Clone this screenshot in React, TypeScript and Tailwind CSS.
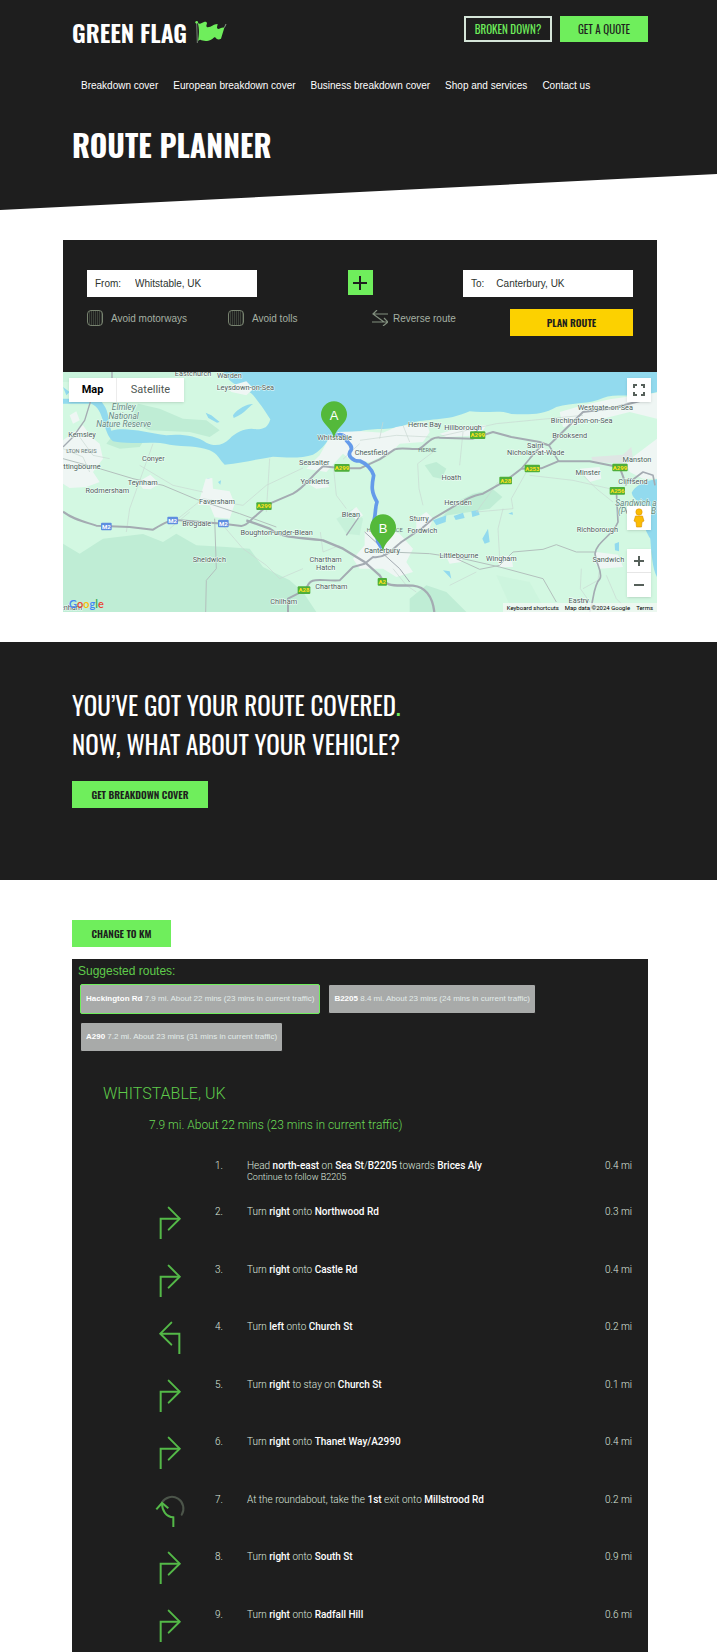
import React from "react";

const display = "font-['Oswald',sans-serif]";
const body = "font-['Liberation_Sans',Arial,sans-serif]";
const roboto = "font-['Roboto',sans-serif]";

const navLinks = ["Breakdown cover", "European breakdown cover", "Business breakdown cover", "Shop and services", "Contact us"];

const routes = [
  { name: "Hackington Rd", info: "7.9 mi. About 22 mins (23 mins in current traffic)", selected: true },
  { name: "B2205", info: "8.4 mi. About 23 mins (24 mins in current traffic)", selected: false },
  { name: "A290", info: "7.2 mi. About 23 mins (31 mins in current traffic)", selected: false },
];

type Turn = "none" | "right" | "left" | "roundabout";
const steps: { turn: Turn; text: React.ReactNode; note?: string; distance: string }[] = [
  { turn: "none", text: <>Head <b>north-east</b> on <b>Sea St</b>/<b>B2205</b> towards <b>Brices Aly</b></>, note: "Continue to follow B2205", distance: "0.4 mi" },
  { turn: "right", text: <>Turn <b>right</b> onto <b>Northwood Rd</b></>, distance: "0.3 mi" },
  { turn: "right", text: <>Turn <b>right</b> onto <b>Castle Rd</b></>, distance: "0.4 mi" },
  { turn: "left", text: <>Turn <b>left</b> onto <b>Church St</b></>, distance: "0.2 mi" },
  { turn: "right", text: <>Turn <b>right</b> to stay on <b>Church St</b></>, distance: "0.1 mi" },
  { turn: "right", text: <>Turn <b>right</b> onto <b>Thanet Way/A2990</b></>, distance: "0.4 mi" },
  { turn: "roundabout", text: <>At the roundabout, take the <b>1st</b> exit onto <b>Millstrood Rd</b></>, distance: "0.2 mi" },
  { turn: "right", text: <>Turn <b>right</b> onto <b>South St</b></>, distance: "0.9 mi" },
  { turn: "right", text: <>Turn <b>right</b> onto <b>Radfall Hill</b></>, distance: "0.6 mi" },
];

function rowHeight(index: number) {
  if (index === 0) return "h-[46px]";
  if (index === steps.length - 1) return "h-10";
  return index % 2 === 0 ? "h-[57px]" : "h-[58px]";
}

function FlagIcon() {
  return (
    <svg viewBox="0 0 96 69" className="h-[23px] w-8" aria-hidden="true">
      <path d="M5 4 L7 66" stroke="#8a9a8a" strokeWidth="2.5" fill="none" />
      <circle cx="5" cy="4" r="4" fill="#6fee5c" />
      <path d="M8 5 C14 12 20 6 27 3 C32 1 36 3 36 7 L34 14 C35 20 39 19 46 17 C54 13 60 9 68 9 L66 19 C66 24 70 25 76 22 C80 20 84 19 88 20 L78 53 C70 58 64 54 60 48 C55 50 50 58 40 59 C28 61 22 58 16 56 C12 56 10 59 9 61 C12 42 14 26 8 5 Z" fill="#6fee5c" />
      <path d="M88 20 L93 9" stroke="#8a9a8a" strokeWidth="3" />
    </svg>
  );
}

function TurnIcon({ turn }: { turn: Turn }) {
  if (turn === "none") return null;
  if (turn === "roundabout") {
    return (
      <svg viewBox="0 0 96 102" className="h-[34px] w-8" fill="none" strokeWidth="6" aria-hidden="true">
        <path d="M24 25 A34 34 0 1 1 83 62" stroke="#4c554a" strokeLinecap="round" />
        <path d="M58 99 V70 C36 68 24 50 24 28" stroke="#54b948" />
        <path d="M7 46 L24 27 L43 43" stroke="#54b948" />
      </svg>
    );
  }
  return (
    <svg viewBox="0 0 96 102" className={turn === "left" ? "h-[34px] w-8 -scale-x-100" : "h-[34px] w-8"} fill="none" stroke="#54b948" strokeWidth="6" aria-hidden="true">
      <path d="M20 99 V38 H76" />
      <path d="M44 5 L77 38 L44 71" strokeLinecap="round" />
    </svg>
  );
}

const places: [string, number, number][] = [
  ["Eastchurch", 390, 9], ["Warden", 499, 15], ["Leysdown-on-Sea", 547, 51], ["Kemsley", 57, 192],
  ["Conyer", 271, 264], ["ttingbourne", 57, 289], ["Teynham", 239, 336], ["Rodmersham", 133, 361],
  ["Faversham", 462, 392], ["Brogdale", 401, 458], ["Boughton-under-Blean", 641, 485], ["Sheldwich", 439, 568],
  ["Chartham", 788, 568], ["Hatch", 788, 590], ["Chartham", 805, 647], ["Chilham", 662, 694],
  ["Seasalter", 754, 276], ["Yorkletts", 756, 332], ["Whitstable", 815, 202], ["Blean", 864, 431],
  ["Chestfield", 924, 247], ["Herne Bay", 1085, 161], ["Hillborough", 1200, 170], ["Westgate-on-Sea", 1627, 110],
  ["Birchington-on-Sea", 1556, 150], ["Brooksend", 1520, 195], ["Saint", 1417, 224], ["Nicholas-at-Wade", 1418, 246],
  ["Manston", 1722, 267], ["Minster", 1575, 305], ["Cliffsend", 1710, 332], ["Hoath", 1165, 320],
  ["Hersden", 1185, 397], ["Sturry", 1068, 443], ["Fordwich", 1078, 480], ["Richborough", 1603, 476],
  ["Canterbury", 957, 541], ["Littlebourne", 1188, 554], ["Wingham", 1315, 563], ["Sandwich", 1636, 568],
  ["Eastry", 1547, 689], ["enham", 24, 712],
];

const shields: [string, number, number, "a" | "m"][] = [
  ["A299", 837, 287, "a"], ["A299", 603, 402, "a"], ["A28", 723, 654, "a"], ["A299", 1244, 189, "a"],
  ["A253", 1408, 289, "a"], ["A28", 1328, 325, "a"], ["A299", 1671, 286, "a"], ["A256", 1663, 356, "a"],
  ["A2", 958, 629, "a"], ["M2", 130, 463, "m"], ["M2", 329, 445, "m"], ["M2", 481, 454, "m"],
];

function Pin({ x, y, label }: { x: number; y: number; label: string }) {
  return (
    <g>
      <path d={`M${x} ${y} C${x - 8} ${y - 34} ${x - 39} ${y - 42} ${x - 39} ${y - 71} A39 39 0 0 1 ${x + 39} ${y - 71} C${x + 39} ${y - 42} ${x + 8} ${y - 34} ${x} ${y} Z`} fill="#54b93a" />
      <text x={x} y={y - 54} textAnchor="middle" fontSize="39" fill="#fff" className={body}>{label}</text>
    </g>
  );
}

function MapDrawing() {
  return (
    <svg viewBox="0 0 1782 720" preserveAspectRatio="xMidYMid slice" className={`block h-full w-full ${roboto}`} role="img" aria-label="Map of the route from Whitstable to Canterbury">
      <rect width="1782" height="720" fill="#d3f8e2" />
      <g fill="#bfedd5">
        <path d="M0 515 L50 545 L120 500 L240 486 L300 510 L340 485 L400 520 L490 525 L560 530 L600 585 L680 625 L720 660 L760 720 L0 720 Z" />
        <path d="M225 95 L290 110 L360 140 L430 145 L470 175 L440 195 L380 180 L260 175 L200 150 Z" />
        <path d="M150 190 L250 195 L230 225 L170 230 L130 215 Z" />
        <path d="M1180 390 L1230 365 L1290 352 L1318 375 L1280 410 L1220 420 L1140 432 Z" />
        <path d="M1085 280 L1120 270 L1150 290 L1135 320 L1110 315 Z" />
        <path d="M1040 680 L1090 640 L1150 660 L1210 720 L1040 720 Z" />
        <path d="M820 440 L870 410 L900 440 L890 490 L850 485 Z" opacity=".6" />
        <path d="M0 0 L420 0 L400 12 L200 20 L0 30 Z" opacity=".5" />
        <path d="M1300 610 L1400 630 L1450 720 L1350 720 Z" opacity=".3" />
      </g>
      <g fill="#92daee">
        <path d="M480 0 C510 50 555 45 575 75 C598 105 605 115 622 142 C615 165 605 172 580 172 C555 165 520 178 500 200 C480 220 455 225 430 212 C400 190 350 185 310 190 C250 182 190 164 145 176 C135 150 140 120 120 95 L110 80 L0 80 L0 95 L85 95 C125 110 118 180 150 208 C200 220 270 205 320 218 C370 225 400 220 440 235 C465 245 470 265 485 278 C540 272 580 262 630 254 C680 258 720 258 750 248 C785 228 790 205 815 185 L891 178 C940 165 980 180 1040 154 C1090 138 1150 150 1220 118 C1270 125 1310 112 1345 126 C1390 128 1440 130 1480 105 C1530 90 1580 98 1620 78 C1660 62 1720 80 1782 60 L1782 0 Z" />
        <path d="M1782 322 C1740 325 1715 345 1706 362 C1710 385 1740 395 1748 410 C1735 440 1745 475 1762 500 C1765 540 1768 590 1782 615 Z" />
        <path d="M510 130 C525 108 555 95 570 96 C555 105 550 122 512 138 Z M428 122 L445 130 L470 150 L462 152 L436 138 Z" />
        <path d="M1110 445 L1150 430 L1148 450 L1120 460 Z M1172 432 L1200 422 L1205 438 L1178 444 Z M1225 418 L1245 414 L1250 428 L1228 435 Z M1258 500 L1275 470 L1280 510 L1265 515 Z" />
        <path d="M465 330 L474 325 L472 338 Z M432 320 L440 318 L438 332 Z M1655 515 L1668 510 L1668 538 L1656 535 Z M1336 425 L1348 420 L1350 428 Z M1140 595 L1160 598 L1165 620 Z M0 45 L20 60 L10 70 Z" />
      </g>
      <g fill="#eff6f4">
        <path d="M0 205 L60 160 L85 195 L110 215 L120 260 L90 300 L110 330 L70 345 L20 348 L0 335 Z" />
        <path d="M20 130 L40 118 L50 145 L30 155 Z M225 330 L262 308 L290 335 L262 352 L240 350 Z" />
        <path d="M428 320 L448 318 L450 350 L500 358 L515 395 L500 440 L455 436 L440 400 L405 398 Z M490 45 L550 28 L572 50 L550 70 L505 60 Z" />
        <path d="M795 205 L825 180 L895 178 L960 182 L1000 165 L1090 150 L1100 180 L1080 210 L1010 215 L985 240 L920 270 L860 262 L840 245 L790 300 L730 290 L770 250 Z" />
        <path d="M735 335 L780 325 L800 345 L760 350 Z M860 420 L880 405 L900 430 L880 445 Z" />
        <path d="M1130 185 L1200 165 L1270 160 L1250 190 L1150 195 Z M1490 120 L1560 100 L1640 82 L1782 62 L1782 140 L1700 120 L1580 150 L1500 165 Z" />
        <path d="M905 480 L960 465 L1010 485 L1050 530 L1030 570 L1050 600 L1000 615 L960 590 L890 590 L870 560 L905 520 Z" />
        <path d="M1060 440 L1090 420 L1110 440 L1095 480 L1060 470 Z M1690 270 L1782 200 L1782 320 L1740 320 L1700 300 Z M1600 540 L1665 548 L1680 585 L1610 590 L1590 565 Z" />
        <path d="M1550 290 L1610 285 L1615 320 L1580 330 Z M1300 555 L1345 550 L1350 585 L1310 585 Z M1150 555 L1200 550 L1195 570 L1160 575 Z M1420 240 L1440 225 L1455 240 Z" />
      </g>
      <path d="M1585 255 L1680 248 L1705 225 L1710 262 L1690 275 L1590 270 Z" fill="#dfe6e4" />
      <g fill="none" stroke="#c8d8d2" strokeWidth="2">
        <path d="M230 280 L330 340 L420 360 M190 480 L200 410 L225 340 L270 215 M345 440 L420 380 L540 400 L610 340 L720 288 M380 420 L320 470" />
        <path d="M480 460 L540 530 L610 580 L650 620 L720 590 M620 260 L610 420" />
        <path d="M891 205 L1000 190 L1100 195 M840 262 L890 215 M1064 275 L1068 350 L1080 400 M1064 275 L1110 240" />
        <path d="M1100 200 L1300 155 L1560 130 M1200 180 L1190 280 M1305 330 L1240 420 L1350 410 L1345 380 L1390 300 M1320 410 L1305 470 L1310 560" />
        <path d="M1160 640 L1240 600 M1400 310 L1530 325 L1640 350 M1560 310 L1600 350 L1650 390 M1630 610 L1660 680 L1700 720 M1560 650 L1605 625 L1610 590 M1555 590 L1552 650 L1580 690" />
        <path d="M812 290 L820 370 L850 410 M772 480 L780 540 L830 520 M990 590 L1030 640 L1060 660 M0 230 L60 255 L80 300 M50 195 L90 250 L140 260 M950 200 L960 150 M1020 160 L1040 210" />
      </g>
      <g fill="none" stroke="#b3c0bd" strokeWidth="3">
        <path d="M0 260 L110 290 L210 320 L300 340 L400 382 L530 425 L640 465" />
        <path d="M455 440 L460 590 L430 625 L428 720 M980 540 L1100 545 L1200 560 L1310 585 L1440 620 L1480 690 M1180 560 L1250 592 L1310 580 L1350 540 L1440 532 L1480 518 L1540 540 L1600 540" />
      </g>
      <g fill="none" stroke="#a4abb2" strokeLinejoin="round">
        <path d="M0 419 C30 442 60 448 100 461 L200 465 L270 473 C300 455 320 442 350 445 L480 455 L535 462 C555 460 560 445 580 430 L620 395 L690 365 C725 345 740 318 780 283 L837 289 L891 289 L950 262 L995 232 C1020 224 1050 235 1070 230 C1095 215 1100 195 1130 197 L1230 200 L1290 180 L1345 195 L1430 210 L1458 220 L1560 120 L1640 110 L1740 85" strokeWidth="6" />
        <path d="M550 445 L620 470 C660 500 700 495 780 505 L840 530 L905 570 L950 610 C970 650 1000 638 1050 641 C1085 645 1108 670 1114 720" strokeWidth="7" />
        <path d="M675 720 L675 680 L730 652 C740 610 770 628 830 625 L870 585 L905 575 L930 555 C970 560 990 530 1015 510 L1075 470 L1110 440 C1180 400 1220 370 1260 365 L1330 325 L1375 290 L1435 289 L1485 268 L1580 268 L1670 286 L1690 340" strokeWidth="6" />
        <path d="M1375 290 L1400 260 L1440 215 L1458 220 L1487 268 M1660 356 L1665 450 C1650 490 1600 510 1596 545 C1600 580 1620 600 1611 620 C1590 640 1592 690 1580 720 M1700 330 L1740 300 L1770 310 L1776 340" strokeWidth="5" />
        <path d="M0 225 L30 195 L65 145 L82 90 M850 490 L891 430 M147 0 L147 20 M385 0 L410 12" strokeWidth="4" />
        <path d="M960 545 L1010 590 L1040 630 M905 480 L960 530" strokeWidth="3" />
      </g>
      <path d="M815 195 C830 180 848 190 850 205 C858 215 870 222 864 235 C850 250 870 268 891 267 C910 275 925 290 932 310 C925 345 925 360 942 390 C935 410 940 420 932 450 L945 510 L960 535" fill="none" stroke="#649bea" strokeWidth="11" strokeLinejoin="round" />
      <g fontSize="22" textAnchor="middle" fill="#4f5c5b" stroke="#f4fffa" strokeWidth="3" strokeLinejoin="round" paintOrder="stroke">
        {places.map(([name, x, y], i) => <text key={i} x={x} y={y + 3}>{name}</text>)}
      </g>
      <g fontSize="17" textAnchor="middle" fill="#6d7a78">
        <text x="55" y="243">LTON REGIS</text>
        <text x="1093" y="240">HERNE</text>
        <text x="965" y="480">HALES PLACE</text>
      </g>
      <g fontSize="25" fontStyle="italic" textAnchor="middle" fill="#648780" stroke="#e8fbf2" strokeWidth="3" paintOrder="stroke">
        <text x="182" y="114">Elmley</text>
        <text x="182" y="140">National</text>
        <text x="182" y="165">Nature Reserve</text>
        <text x="1719" y="401">Sandwich a</text>
        <text x="1722" y="426">(Pegwell B</text>
      </g>
      <g fontSize="18" fontWeight="700" textAnchor="middle">
        {shields.map(([name, x, y, kind], i) => {
          const w = kind === "m" ? 32 : name.length === 4 ? 46 : name.length === 3 ? 38 : 28;
          return (
            <g key={i}>
              <rect x={x - w / 2} y={y - 11} width={w} height="23" rx="3" fill={kind === "m" ? "#5f8ee0" : "#4fae3a"} />
              <text x={x} y={y + 7} fill={kind === "m" ? "#fff" : "#ffe11a"}>{name}</text>
            </g>
          );
        })}
      </g>
      <Pin x={813} y={198} label="A" />
      <Pin x={960} y={537} label="B" />
    </svg>
  );
}

function GoogleMap() {
  const control = "absolute right-[6px] flex w-6 items-center justify-center bg-white text-[#56605a] shadow-sm";
  return (
    <section className={`relative h-[240px] overflow-hidden ${roboto}`} aria-label="Map">
      <MapDrawing />
      <div className="absolute left-[6px] top-[6px] flex h-6 bg-white text-[11px] shadow-sm">
        <button className="w-12 border-r border-[#ececec] font-bold text-black">Map</button>
        <button className="w-[67px] text-[#4f5753]">Satellite</button>
      </div>
      <button aria-label="Toggle full screen" className={`${control} top-[6px] h-6`}>
        <svg viewBox="0 0 12 12" className="size-3" fill="none" stroke="currentColor" strokeWidth="2"><path d="M1 4V1H4M8 1H11V4M11 8V11H8M4 11H1V8" /></svg>
      </button>
      <button aria-label="Street View" className={`${control} top-[134px] h-6`}>
        <svg viewBox="0 0 12 20" className="h-5 w-3"><circle cx="6" cy="4" r="3.2" fill="#fbbc04" stroke="#d98d00" strokeWidth=".5" /><path d="M2.5 8H9.5L11 13L9 14L8.5 19H3.5L3 14L1 13Z" fill="#fbbc04" stroke="#d98d00" strokeWidth=".6" /></svg>
      </button>
      <div className={`${control} top-[177px] flex-col`}>
        <button aria-label="Zoom in" className="flex h-6 w-6 items-center justify-center border-b border-[#e6e6e6]">
          <svg viewBox="0 0 12 12" className="size-3" stroke="currentColor" strokeWidth="2"><path d="M6 1V11M1 6H11" /></svg>
        </button>
        <button aria-label="Zoom out" className="flex h-6 w-6 items-center justify-center">
          <svg viewBox="0 0 12 12" className="size-3" stroke="currentColor" strokeWidth="2"><path d="M1 6H11" /></svg>
        </button>
      </div>
      <span className="absolute bottom-px left-[6px] font-['Lato',sans-serif] text-[11px] font-semibold leading-[14px]">
        <span className="text-[#4285f4]">G</span><span className="text-[#ea4335]">o</span><span className="text-[#fbbc04]">o</span><span className="text-[#4285f4]">g</span><span className="text-[#34a853]">l</span><span className="text-[#ea4335]">e</span>
      </span>
      <div className="absolute bottom-0 right-0 flex gap-[6px] bg-[#f2f7f4]/80 px-1 text-[6px] leading-[9px] text-black">
        <button>Keyboard shortcuts</button>
        <span>Map data ©2024 Google</span>
        <a href="#terms">Terms</a>
      </div>
    </section>
  );
}

function PlaceField({ id, label, value, gap }: { id: string; label: string; value: string; gap: string }) {
  return (
    <div className={`flex h-[27px] w-[170px] items-center bg-white px-2 text-[10px] text-[#2c332e] ${gap}`}>
      <label htmlFor={id}>{label}</label>
      <input id={id} defaultValue={value} className="min-w-0 flex-1 outline-none" />
    </div>
  );
}

function Check({ id, label, className }: { id: string; label: string; className: string }) {
  return (
    <div className={`flex items-center gap-2 ${className}`}>
      <input id={id} type="checkbox" className="size-4 appearance-none rounded-[4px] border border-[#77826f] bg-[repeating-linear-gradient(90deg,#1e1e1e_0,#1e1e1e_1px,#3c423a_1px,#3c423a_2px)]" />
      <label htmlFor={id}>{label}</label>
    </div>
  );
}

export default function App() {
  const solid = `h-[27px] text-[10px] font-semibold text-[#1e1e1e] ${display}`;
  return (
    <div className={`flex min-h-screen flex-col bg-white ${body}`}>
      <header className="h-[210px] bg-[#1e1e1e] pl-[72px] pr-[69px] pt-4 text-white [clip-path:polygon(0_0,100%_0,100%_174px,0_210px)]">
        <div className="flex items-start justify-between">
          <a href="#home" className={`flex items-center gap-2 text-2xl font-semibold leading-8 ${display}`}>
            GREEN FLAG <FlagIcon />
          </a>
          <div className={`flex gap-2 text-[11px] ${display}`}>
            <button className="h-[26px] w-[88px] border-2 border-[#d5e5d8] text-[#6fee5c]">BROKEN DOWN?</button>
            <button className="h-[26px] w-[88px] bg-[#6fee5c] text-[#1e1e1e]">GET A QUOTE</button>
          </div>
        </div>
        <nav className="mt-[30px] flex gap-[15px] whitespace-nowrap pl-[9px] text-[10px] leading-4">
          {navLinks.map((l) => <a key={l} href="#nav">{l}</a>)}
        </nav>
        <h1 className={`mt-[31px] text-3xl font-bold leading-10 ${display}`}>ROUTE PLANNER</h1>
      </header>

      <main className="flex flex-1 flex-col">
        <div className="ml-[63px] mr-[60px] mt-[30px]">
          <form className="bg-[#1e1e1e] px-6 pb-9 pt-[30px]" onSubmit={(e) => e.preventDefault()}>
            <div className="flex items-start justify-between">
              <PlaceField id="from" label="From:" value="Whitstable, UK" gap="gap-[14px]" />
              <button type="button" aria-label="Add a stop" className="flex size-[25px] items-center justify-center bg-[#6fee5c]">
                <svg viewBox="0 0 14 14" className="size-[14px]" stroke="#1e1e1e" strokeWidth="2"><path d="M7 0V14M0 7H14" /></svg>
              </button>
              <PlaceField id="to" label="To:" value="Canterbury, UK" gap="gap-3" />
            </div>
            <div className="mt-3 flex items-start text-[10px] text-[#a5b0a3]">
              <Check id="motorways" label="Avoid motorways" className="h-[18px] w-[141px]" />
              <Check id="tolls" label="Avoid tolls" className="h-[18px] w-[144px]" />
              <button type="button" className="flex h-[18px] items-center gap-[5px]">
                <svg viewBox="0 0 16 16" className="size-4" fill="none" stroke="#82907f" strokeWidth="1.2"><path d="M16 4H1M5 0L1 4L12 12M0 12H15M12 8L16 12L11 16" /></svg>
                Reverse route
              </button>
              <button className={`ml-auto w-[123px] bg-[#fcd100] ${solid}`}>PLAN ROUTE</button>
            </div>
          </form>
          <GoogleMap />
        </div>

        <section className="mt-[30px] bg-[#1e1e1e] px-[72px] pb-[72px] pt-[43px] text-white">
          <h2 className={`text-[25px] leading-[39px] ${display}`}>
            YOU’VE GOT YOUR ROUTE COVERED<span className="text-[#6fee5c]">.</span>
            <br />
            NOW, WHAT ABOUT YOUR VEHICLE?
          </h2>
          <button className={`mt-[18px] w-[136px] bg-[#6fee5c] ${solid}`}>GET BREAKDOWN COVER</button>
        </section>

        <div className="ml-[72px] mr-[69px] mt-10 flex flex-1 flex-col">
          <button className={`w-[99px] bg-[#6fee5c] ${solid}`}>CHANGE TO KM</button>
          <section className="mt-3 flex-1 bg-[#1e1e1e] pt-1">
            <h2 className="pl-[6px] text-xs leading-4 text-[#5fcb4b]">Suggested routes:</h2>
            <div className="mt-[5px] flex flex-wrap gap-2 pl-2">
              {routes.map((r) => (
                <button key={r.name} className={`h-[30px] rounded-[2px] border bg-[#a8aaa9] px-[5px] text-[8px] text-[#e3ecea] ${r.selected ? "border-[#6fee5c]" : "border-[#1e1e1e]"}`}>
                  <b className="text-white">{r.name}</b> {r.info}
                </button>
              ))}
            </div>
            <div className={`pl-[31px] pr-4 pt-[30px] ${roboto}`}>
              <h3 className="text-base font-light leading-6 text-[#5fcb4b]">WHITSTABLE, UK</h3>
              <p className="mt-[11px] pl-[46px] text-xs font-light leading-4 text-[#6bdc56]">7.9 mi. About 22 mins (23 mins in current traffic)</p>
              <table className="mt-[27px] w-full text-[10px] font-light leading-3 text-[#dfe8df] [&_b]:font-medium [&_b]:text-white">
                <tbody>
                  {steps.map((s, i) => (
                    <tr key={i} className={`align-top ${rowHeight(i)}`}>
                      <td className="w-[105px] pl-[51px]"><TurnIcon turn={s.turn} /></td>
                      <td className="w-[39px] pl-[7px]">{i + 1}.</td>
                      <td>
                        {s.text}
                        {s.note && <div className="text-[9px] leading-[10px]">{s.note}</div>}
                      </td>
                      <td className="w-12 text-right">{s.distance}</td>
                    </tr>
                  ))}
                </tbody>
              </table>
            </div>
          </section>
        </div>
      </main>
    </div>
  );
}
